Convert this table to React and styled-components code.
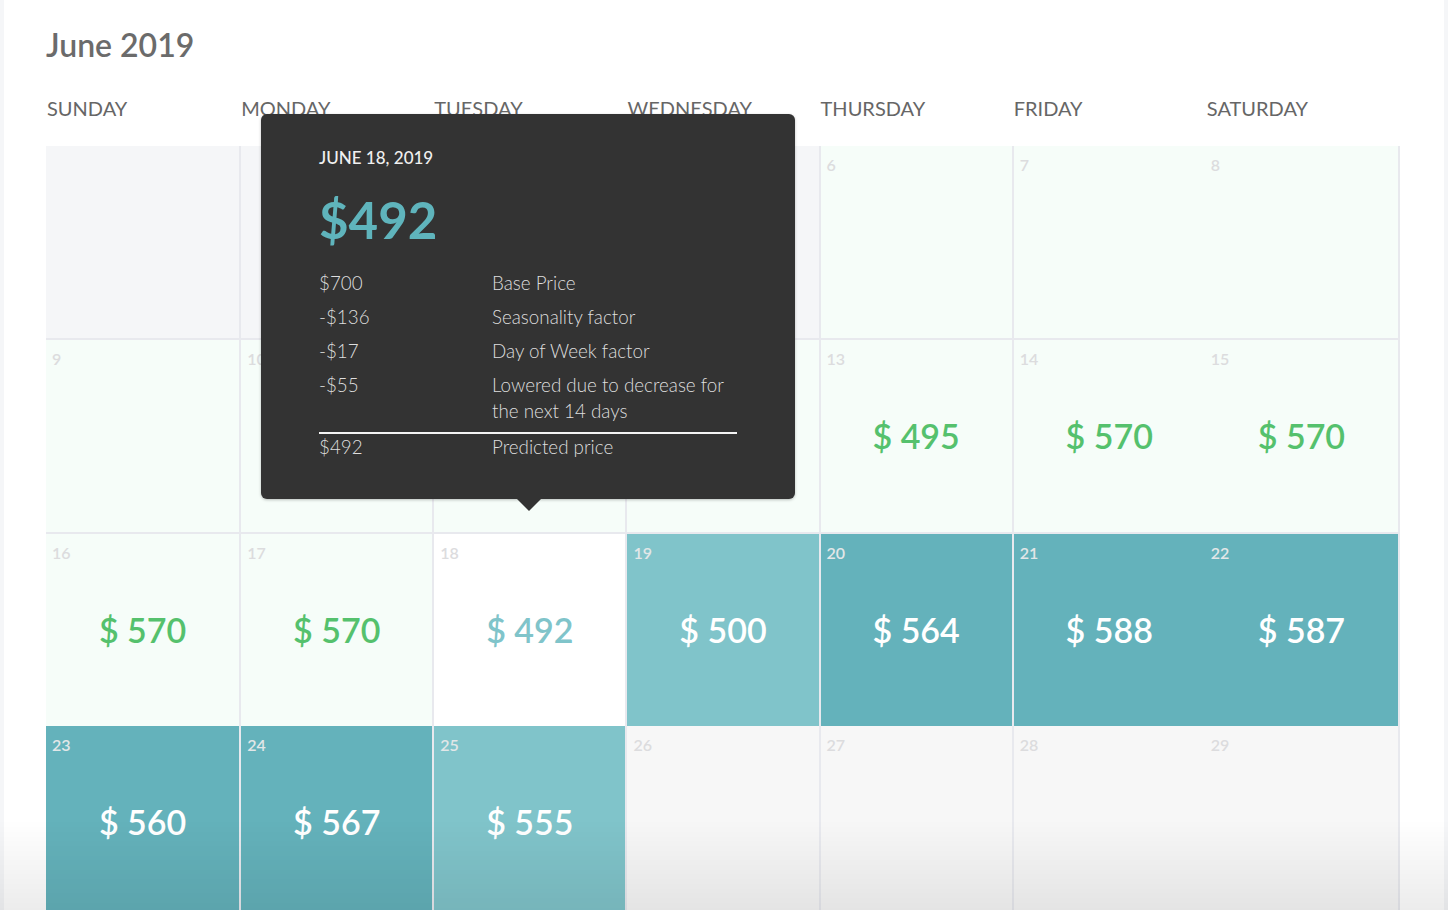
import React from 'react';
import styled, { createGlobalStyle } from 'styled-components';

const GlobalStyle = createGlobalStyle`
	html, body {
		margin: 0;
		padding: 0;
		background: #f5f6f8;
	}
	body {
		font-family: 'Lato', 'Open Sans', sans-serif;
		-webkit-font-smoothing: antialiased;
	}
`;

const DAYS = ['Sunday', 'Monday', 'Tuesday', 'Wednesday', 'Thursday', 'Friday', 'Saturday'];

// kind: past | open | selected | light | teal | closed
const WEEKS = [
	[
		{ day: 2, kind: 'past' },
		{ day: 3, kind: 'past' },
		{ day: 4, kind: 'past' },
		{ day: 5, kind: 'past' },
		{ day: 6, kind: 'open' },
		{ day: 7, kind: 'open' },
		{ day: 8, kind: 'open' },
	],
	[
		{ day: 9, kind: 'open' },
		{ day: 10, kind: 'open' },
		{ day: 11, kind: 'open' },
		{ day: 12, kind: 'open' },
		{ day: 13, kind: 'open', price: 495 },
		{ day: 14, kind: 'open', price: 570 },
		{ day: 15, kind: 'open', price: 570 },
	],
	[
		{ day: 16, kind: 'open', price: 570 },
		{ day: 17, kind: 'open', price: 570 },
		{ day: 18, kind: 'selected', price: 492 },
		{ day: 19, kind: 'light', price: 500 },
		{ day: 20, kind: 'teal', price: 564 },
		{ day: 21, kind: 'teal', price: 588 },
		{ day: 22, kind: 'teal', price: 587 },
	],
	[
		{ day: 23, kind: 'teal', price: 560 },
		{ day: 24, kind: 'teal', price: 567 },
		{ day: 25, kind: 'light', price: 555 },
		{ day: 26, kind: 'closed' },
		{ day: 27, kind: 'closed' },
		{ day: 28, kind: 'closed' },
		{ day: 29, kind: 'closed' },
	],
];

const BREAKDOWN = [
	['$700', 'Base Price'],
	['-$136', 'Seasonality factor'],
	['-$17', 'Day of Week factor'],
	['-$55', 'Lowered due to decrease for the next 14 days'],
];

const cellBg = {
	past: '#f5f6f8',
	open: '#f6fdf9',
	selected: '#ffffff',
	light: '#80c4ca',
	teal: '#64b2bb',
	closed: '#f7f7f7',
};

const priceColor = {
	open: '#55c16d',
	selected: '#80c4ca',
	light: '#ffffff',
	teal: '#ffffff',
};

const Panel = styled.div`
	margin: 0 4px;
	height: 910px;
	overflow: hidden;
	background: #fff;
	padding: 27px 0 0 42px;
	box-sizing: border-box;
`;

const Title = styled.h1`
	margin: 0;
	font-size: 32px;
	line-height: 36px;
	font-weight: 600;
	color: #6b6b6b;
`;

const WeekHeader = styled.div`
	display: grid;
	grid-template-columns: repeat(7, 1fr);
	width: 1352px;
	margin-top: 33px;
`;

const DayName = styled.div`
	padding-left: ${(p) => (p.$col === 0 ? 1 : 2)}px;
	font-size: 20px;
	line-height: 24px;
	color: #666;
	text-transform: uppercase;
`;

const GridWrap = styled.div`
	position: relative;
	margin-top: 26px;
	width: 1354px;
`;

const Grid = styled.div`
	display: grid;
	grid-template-columns: repeat(7, 1fr);
	border-right: 2px solid #e8e9ee;
`;

const Cell = styled.div`
	position: relative;
	box-sizing: border-box;
	height: ${(p) => (p.$row === 1 || p.$row === 2 ? 194 : 192)}px;
	background: ${(p) => cellBg[p.$kind]};
	border-left: ${(p) => (p.$col > 0 && p.$col < 6 ? '2px solid #e8e9ee' : 'none')};
	border-top: ${(p) => (p.$row === 1 || p.$row === 2 ? '2px solid #e8e9ee' : 'none')};
	display: flex;
	align-items: center;
	justify-content: center;
`;

const DayNum = styled.span`
	position: absolute;
	top: 9px;
	left: 6px;
	font-size: 16px;
	line-height: 20px;
	font-weight: 600;
	color: ${(p) => (p.$onTeal ? '#e2e7e8' : '#dcdcde')};
`;

const Price = styled.span`
	font-size: 34px;
	line-height: 40px;
	font-weight: 600;
	color: ${(p) => priceColor[p.$kind]};
`;

const Tooltip = styled.div`
	position: absolute;
	left: 215px;
	top: -32px;
	width: 534px;
	box-sizing: border-box;
	padding: 32px 58px 39px;
	background: #333;
	border-radius: 6px;
	box-shadow: 0 1px 3px rgba(0, 0, 0, 0.25);
	color: #dedede;
	z-index: 2;

	&::after {
		content: '';
		position: absolute;
		left: 256px;
		bottom: -12px;
		border-left: 12px solid transparent;
		border-right: 12px solid transparent;
		border-top: 12px solid #333;
	}
`;

const TipDate = styled.div`
	font-size: 17px;
	line-height: 24px;
	font-weight: 500;
	color: #f0f0f0;
	text-transform: uppercase;
`;

const TipPrice = styled.div`
	margin-top: 22px;
	font-size: 51px;
	line-height: 56px;
	font-weight: 700;
	color: #5fb4bc;
`;

const Breakdown = styled.div`
	margin-top: 22px;
	display: grid;
	grid-template-columns: 173px 1fr;
	row-gap: 8px;
	font-size: 18.8px;
	line-height: 26px;
	font-weight: 300;
`;

const Total = styled(Breakdown)`
	margin-top: 8px;
	border-top: 2px solid #f4f4f4;
`;

const Fade = styled.div`
	position: fixed;
	left: 0;
	right: 0;
	bottom: 0;
	height: 90px;
	pointer-events: none;
	background: linear-gradient(to bottom, rgba(0, 0, 0, 0), rgba(0, 0, 0, 0.075));
	z-index: 3;
`;

const App = () => (
	<>
		<GlobalStyle />
		<Panel>
			<Title>June 2019</Title>
			<WeekHeader>
				{DAYS.map((d, i) => (
					<DayName key={d} $col={i}>
						{d}
					</DayName>
				))}
			</WeekHeader>
			<GridWrap>
				<Grid>
					{WEEKS.map((week, r) =>
						week.map((c, i) => (
							<Cell key={c.day} $row={r} $col={i} $kind={c.kind}>
								{c.kind !== 'past' && (
									<DayNum $onTeal={c.kind === 'teal' || c.kind === 'light'}>{c.day}</DayNum>
								)}
								{c.price && <Price $kind={c.kind}>$ {c.price}</Price>}
							</Cell>
						))
					)}
				</Grid>
				<Tooltip>
					<TipDate>June 18, 2019</TipDate>
					<TipPrice>$492</TipPrice>
					<Breakdown>
						{BREAKDOWN.map(([amount, label]) => (
							<React.Fragment key={label}>
								<span>{amount}</span>
								<span>{label}</span>
							</React.Fragment>
						))}
					</Breakdown>
					<Total>
						<span>$492</span>
						<span>Predicted price</span>
					</Total>
				</Tooltip>
			</GridWrap>
		</Panel>
		<Fade />
	</>
);

export default App;
